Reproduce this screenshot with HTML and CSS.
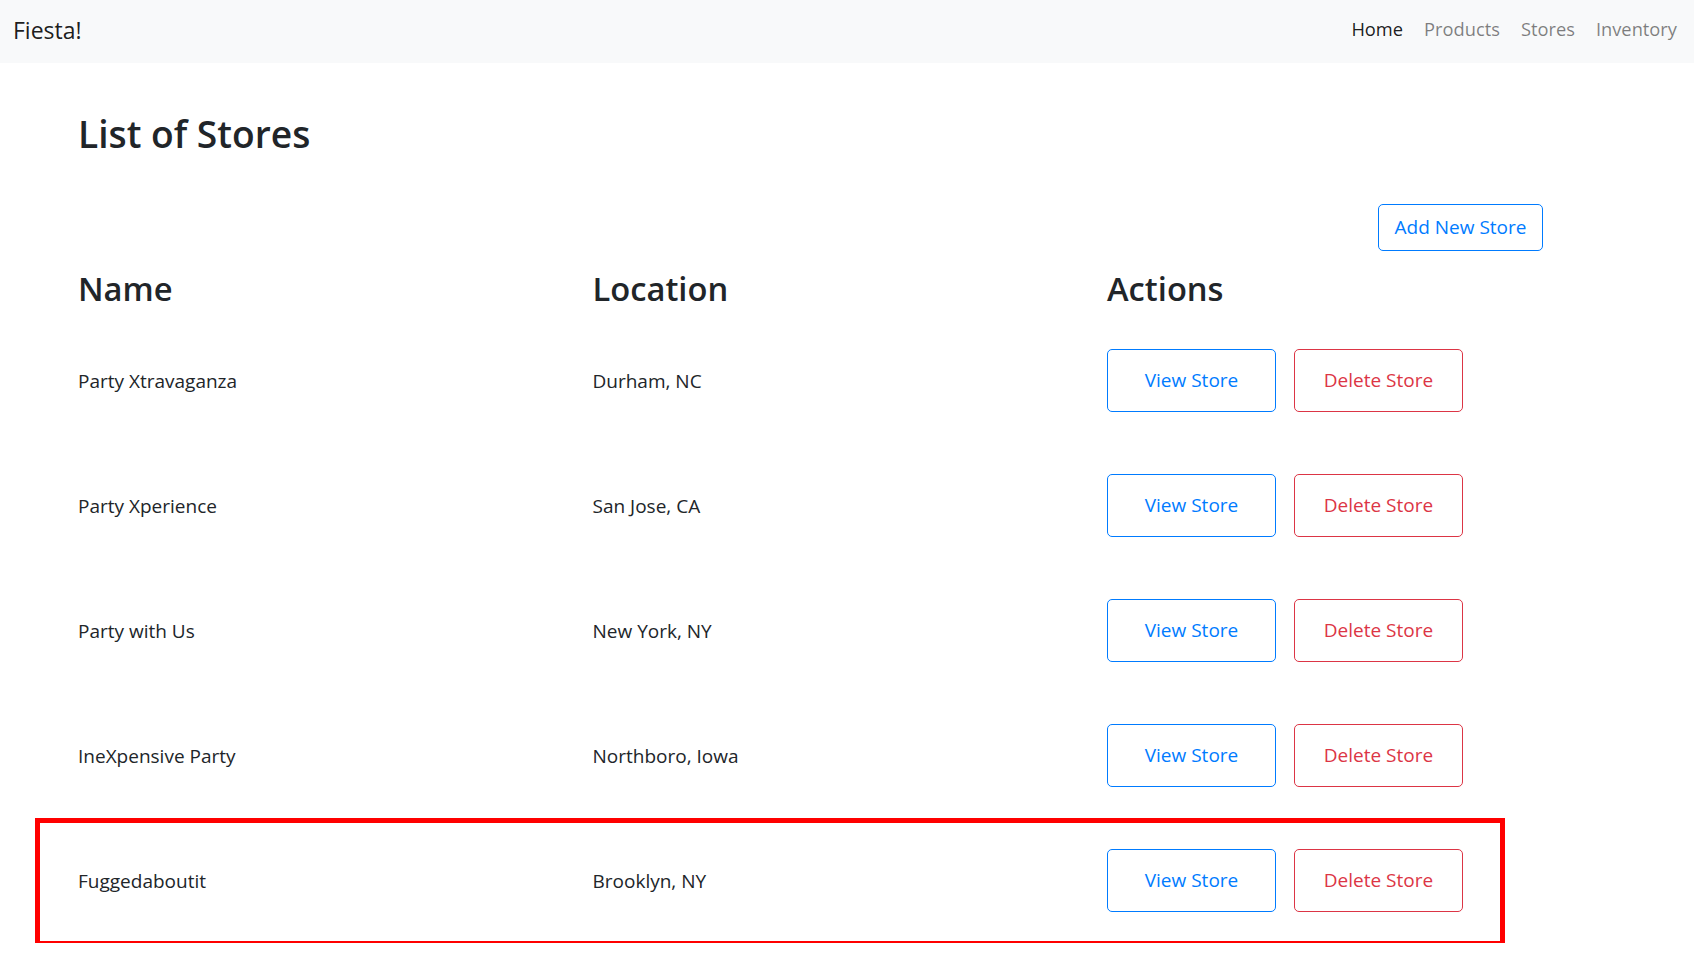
FILE: index.html
```html
<!DOCTYPE html>
<html lang="en">
<head>
<meta charset="utf-8">
<title>Fiesta! - Stores</title>
<link rel="stylesheet" href="styles.css">
</head>
<body>
<nav class="navbar">
  <a class="brand" href="#">Fiesta!</a>
  <ul class="nav-links">
    <li><a class="nav-link active" href="#">Home</a></li>
    <li><a class="nav-link" href="#">Products</a></li>
    <li><a class="nav-link" href="#">Stores</a></li>
    <li><a class="nav-link" href="#">Inventory</a></li>
  </ul>
</nav>
<main class="page">
  <h1 class="title">List of Stores</h1>
  <div class="toolbar">
    <button class="btn btn-blue btn-add">Add New Store</button>
  </div>
  <div class="table">
    <div class="row head">
      <div>Name</div>
      <div>Location</div>
      <div>Actions</div>
    </div>
    <div class="row">
      <div>Party Xtravaganza</div>
      <div>Durham, NC</div>
      <div class="actions"><button class="btn btn-blue">View Store</button><button class="btn btn-red">Delete Store</button></div>
    </div>
    <div class="row">
      <div>Party Xperience</div>
      <div>San Jose, CA</div>
      <div class="actions"><button class="btn btn-blue">View Store</button><button class="btn btn-red">Delete Store</button></div>
    </div>
    <div class="row">
      <div>Party with Us</div>
      <div>New York, NY</div>
      <div class="actions"><button class="btn btn-blue">View Store</button><button class="btn btn-red">Delete Store</button></div>
    </div>
    <div class="row">
      <div>IneXpensive Party</div>
      <div>Northboro, Iowa</div>
      <div class="actions"><button class="btn btn-blue">View Store</button><button class="btn btn-red">Delete Store</button></div>
    </div>
    <div class="row highlight">
      <div>Fuggedaboutit</div>
      <div>Brooklyn, NY</div>
      <div class="actions"><button class="btn btn-blue">View Store</button><button class="btn btn-red">Delete Store</button></div>
    </div>
  </div>
</main>
</body>
</html>
```

FILE: styles.css
```css
* { box-sizing: border-box; }
html, body { margin: 0; padding: 0; }
body {
  font-family: "Open Sans", "Noto Sans", sans-serif;
  color: #212529;
  background: #fff;
  font-size: 19px;
  overflow: hidden;
}
.navbar {
  height: 63px;
  background: #f8f9fa;
  display: flex;
  align-items: flex-start;
  justify-content: space-between;
  padding: 0 17px 0 13px;
}
.brand {
  margin-top: 13px;
  font-size: 23px;
  line-height: 34px;
  color: rgba(0,0,0,.9);
  text-decoration: none;
}
.nav-links {
  list-style: none;
  margin: 15px 0 0;
  padding: 0;
  display: flex;
  gap: 21px;
}
.nav-link {
  font-size: 18.3px;
  line-height: 27px;
  color: rgba(0,0,0,.5);
  text-decoration: none;
}
.nav-link.active { color: rgba(0,0,0,.9); }
.page { padding-left: 78px; }
.title {
  margin: 47px 0 0;
  font-size: 37.2px;
  line-height: 47px;
  font-weight: 600;
}
.toolbar {
  width: 1465px;
  margin-top: 47px;
  display: flex;
  justify-content: flex-end;
}
.table { width: 1465px; margin-top: 17px; }
.row {
  display: grid;
  grid-template-columns: 514.5px 514.5px auto;
  align-items: center;
  height: 125px;
  position: relative;
}
.row.head {
  height: auto;
  font-size: 32.7px;
  line-height: 41px;
  font-weight: 600;
  padding-bottom: 9px;
}
.row:not(.head) > div:not(.actions) { padding-top: 1px; }
.actions { display: flex; gap: 18px; }
.btn {
  font-family: inherit;
  font-size: 19px;
  line-height: 27px;
  background: #fff;
  border: 1px solid;
  border-radius: 5px;
  width: 169px;
  padding: 17px 0;
  text-align: center;
  cursor: pointer;
}
.btn-blue { color: #007bff; border-color: #007bff; }
.btn-red { color: #dc3545; border-color: #dc3545; }
.btn-add { width: 165px; padding: 9px 0; }
.highlight::after {
  content: "";
  position: absolute;
  left: -43px;
  right: 38px;
  top: 0;
  bottom: -3px;
  border: 5px solid #ff0000;
  pointer-events: none;
}
```
